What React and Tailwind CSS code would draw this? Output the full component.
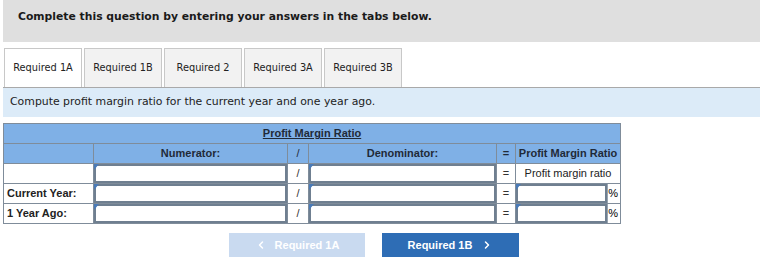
import React from 'react';
import { ChevronLeft, ChevronRight } from 'lucide-react';

const tabs = ['Required 1A', 'Required 1B', 'Required 2', 'Required 3A', 'Required 3B'];

const InputCell = ({ suffix }) => (
  <td className="border border-[#7f8c9a] p-0 h-[20px]">
    <div className="relative flex h-full">
      <input className="flex-1 min-w-0 h-full border-2 border-[#6f7f90] bg-white outline-none" />
      <div className="absolute z-10 left-0 top-0 w-0 h-0 border-t-[6px] border-r-[5px] border-t-[#4a7bb8] border-r-transparent" />
      {suffix && (
        <span className="w-[13px] border-l border-[#9aa5b1] text-right pr-[2px] leading-[19px]">{suffix}</span>
      )}
    </div>
  </td>
);

const Row = ({ label, result }) => (
  <tr>
    <td className="border border-[#7f8c9a] h-[20px] px-[3px] font-bold text-[#222]">{label}</td>
    <InputCell />
    <td className="border border-[#7f8c9a] text-center text-[#333]">/</td>
    <InputCell />
    <td className="border border-[#7f8c9a] text-center text-[#333]">=</td>
    {result ? (
      <td className="border border-[#7f8c9a] text-center text-[#222]">{result}</td>
    ) : (
      <InputCell suffix="%" />
    )}
  </tr>
);

const App = () => {
  return (
    <div className="w-[764px] h-[272px] bg-white overflow-hidden">
      <div className="ml-[3px] w-[757px]">
        <div className="h-[42px] bg-[#dfdfdf] pl-[15px] pt-[9px]">
          <p className="text-[10.8px] font-bold text-[#1a1a1a]" style={{ fontFamily: '"DejaVu Sans", Verdana, sans-serif' }}>
            Complete this question by entering your answers in the tabs below.
          </p>
        </div>

        <div
          className="mt-[6px] flex gap-[2px] pl-[1px] border-b border-[#a9a9a9]"
          style={{ fontFamily: '"DejaVu Sans", Verdana, sans-serif' }}
        >
          {tabs.map((t, i) => (
            <div
              key={t}
              className={`w-[78px] h-[39px] flex items-center justify-center text-[9.8px] text-[#222] border border-b-0 border-[#c8c8c8] ${
                i === 0 ? 'bg-white border-[#b5b5b5]' : 'bg-[#f2f2f2]'
              }`}
            >
              {t}
            </div>
          ))}
        </div>

        <div
          className="h-[29px] bg-[#dcebf8] pl-[7px] flex items-center text-[10.9px] text-[#222]"
          style={{ fontFamily: '"DejaVu Sans", Verdana, sans-serif' }}
        >
          Compute profit margin ratio for the current year and one year ago.
        </div>

        <table
          className="mt-[6px] w-[617px] table-fixed border-collapse text-[11px]"
          style={{ fontFamily: '"Liberation Sans", Arial, sans-serif' }}
        >
          <colgroup>
            <col className="w-[90px]" />
            <col className="w-[194px]" />
            <col className="w-[21px]" />
            <col className="w-[188px]" />
            <col className="w-[19px]" />
            <col className="w-[105px]" />
          </colgroup>
          <thead>
            <tr className="bg-[#7fb0e6]">
              <th colSpan={6} className="border border-[#7f8c9a] h-[20px] font-bold text-[#1f2a38] underline">
                Profit Margin Ratio
              </th>
            </tr>
            <tr className="bg-[#7fb0e6] text-[#1f2a38]">
              <th className="border border-[#7f8c9a] h-[20px]"></th>
              <th className="border border-[#7f8c9a] font-bold">Numerator:</th>
              <th className="border border-[#7f8c9a] font-normal">/</th>
              <th className="border border-[#7f8c9a] font-bold">Denominator:</th>
              <th className="border border-[#7f8c9a] font-bold">=</th>
              <th className="border border-[#7f8c9a] font-bold">Profit Margin Ratio</th>
            </tr>
          </thead>
          <tbody>
            <Row label="" result="Profit margin ratio" />
            <Row label="Current Year:" />
            <Row label="1 Year Ago:" />
          </tbody>
        </table>

        <div
          className="mt-[9px] ml-[226px] flex gap-[17px] text-[11px] font-bold text-white"
          style={{ fontFamily: '"Liberation Sans", Arial, sans-serif' }}
        >
          <button className="w-[136px] h-[24px] bg-[#c9daf0] flex items-center justify-center gap-[8px]">
            <ChevronLeft size={12} strokeWidth={3} />
            Required 1A
          </button>
          <button className="w-[137px] h-[24px] bg-[#2e6db5] flex items-center justify-center gap-[9px]">
            Required 1B
            <ChevronRight size={12} strokeWidth={3} />
          </button>
        </div>
      </div>
    </div>
  );
};

export default App;
